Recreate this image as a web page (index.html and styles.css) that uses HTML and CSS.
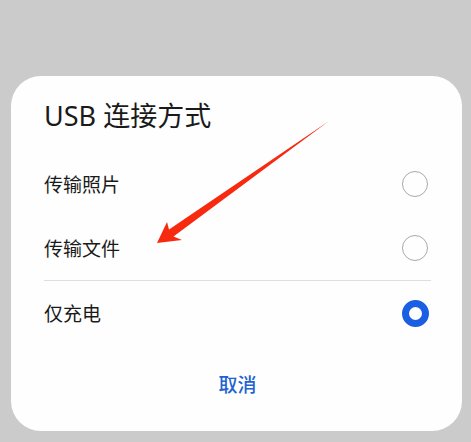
FILE: index.html
```html
<!DOCTYPE html>
<html lang="zh">
<head>
<meta charset="utf-8">
<link rel="stylesheet" href="styles.css">
</head>
<body>
<div class="screen">
  <div class="dialog">
    <h1 class="title">USB 连接方式</h1>
    <div class="options">
      <div class="row"><span class="label">传输照片</span><span class="radio"></span></div>
      <div class="row"><span class="label">传输文件</span><span class="radio"></span></div>
      <div class="divider"></div>
      <div class="row"><span class="label">仅充电</span><span class="radio checked"></span></div>
    </div>
    <div class="actions"><span class="cancel">取消</span></div>
  </div>
  <svg class="arrow" width="471" height="442" viewBox="0 0 471 442">
    <polygon points="157,243 167,222 169,229.5 329,121 173.5,236.5 182,240" fill="#f72a10"/>
  </svg>
</div>
</body>
</html>
```

FILE: styles.css
```css
html, body {
  margin: 0;
  padding: 0;
}
body {
  background: #cbcbcb;
  font-family: "Noto Sans", "Noto Sans CJK SC", sans-serif;
  width: 471px;
  height: 442px;
  overflow: hidden;
}
.screen {
  position: relative;
  width: 471px;
  height: 442px;
  padding-top: 76px;
  padding-left: 11px;
  box-sizing: border-box;
}
.dialog {
  width: 451px;
  height: 355px;
  background: #fefefe;
  border-radius: 30px;
  box-sizing: border-box;
  padding: 24px 31px 0 33px;
  display: flex;
  flex-direction: column;
}
.title {
  margin: 0;
  font-size: 27px;
  font-weight: 400;
  line-height: 32px;
  color: #1a1a1a;
  height: 32px;
}
.options {
  margin-top: 20px;
  display: flex;
  flex-direction: column;
}
.row {
  height: 64px;
  display: flex;
  align-items: center;
  justify-content: space-between;
}
.label {
  font-size: 19px;
  color: #1a1a1a;
  font-family: "Noto Sans CJK SC", sans-serif;
  margin-top: -2px;
}
.radio {
  width: 26px;
  height: 26px;
  box-sizing: border-box;
  border: 1.5px solid #a9a9a9;
  border-radius: 50%;
  margin-right: 3px;
}
.radio.checked {
  width: 27px;
  height: 27px;
  border: 7.5px solid #1a5fe3;
  margin-right: 2.5px;
}
.divider {
  height: 1px;
  background: #dedede;
}
.actions {
  margin-top: 18px;
  height: 40px;
  display: flex;
  align-items: center;
  justify-content: center;
}
.cancel {
  font-family: "Noto Sans CJK SC", sans-serif;
  font-size: 19px;
  font-weight: 500;
  color: #2262cf;
}
.arrow {
  position: absolute;
  left: 0;
  top: 0;
}
```
